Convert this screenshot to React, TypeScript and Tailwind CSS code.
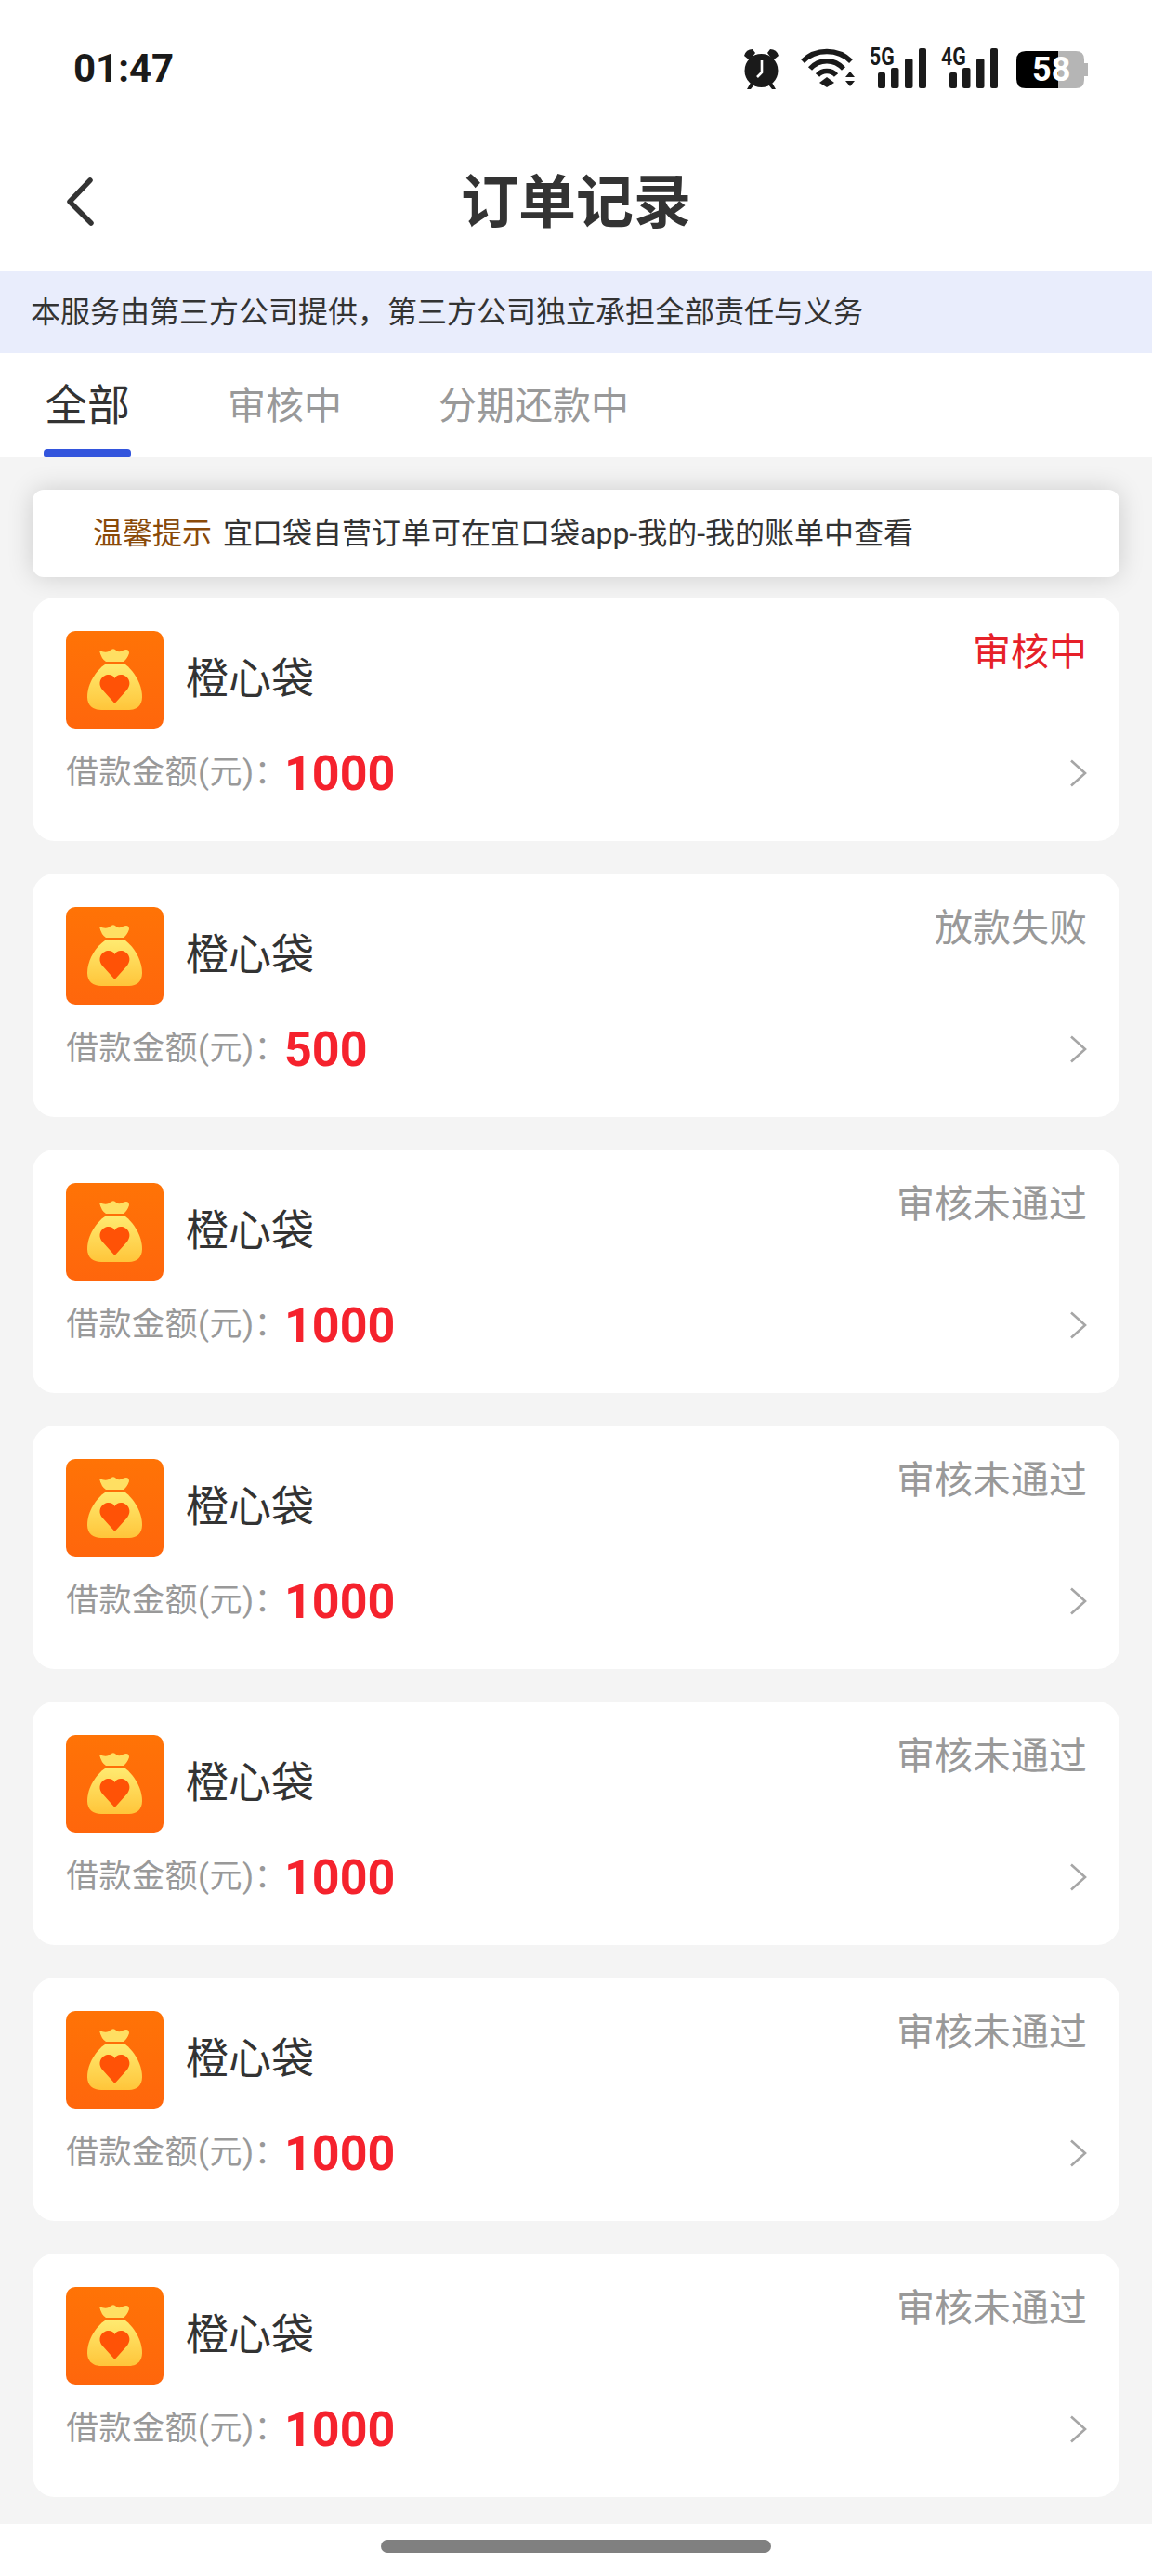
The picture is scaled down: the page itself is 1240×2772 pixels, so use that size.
const orders = [
  { amount: '1000', status: '审核中', active: true },
  { amount: '500', status: '放款失败' },
  { amount: '1000', status: '审核未通过' },
  { amount: '1000', status: '审核未通过' },
  { amount: '1000', status: '审核未通过' },
  { amount: '1000', status: '审核未通过' },
  { amount: '1000', status: '审核未通过' },
];

function AlarmIcon() {
  return (
    <svg width="43" height="44" viewBox="0 0 43 44" className="shrink-0">
      <path d="M9 13 3 8Q5 1 12 1l3 4Z" fill="#1a1a1a" />
      <path d="M34 13l6-5Q38 1 31 1l-3 4Z" fill="#1a1a1a" />
      <path d="M10 37 6 44h4l4-5ZM33 37l4 7h-4l-4-5Z" fill="#1a1a1a" />
      <circle cx="21.5" cy="24" r="18" fill="#1a1a1a" />
      <path d="M22 13v13l-5 5" fill="none" stroke="#fff" strokeWidth="2.6" />
    </svg>
  );
}

function WifiIcon() {
  return (
    <svg width="60" height="42" viewBox="0 0 60 42" className="ml-[21px] shrink-0">
      <g fill="none" stroke="#1a1a1a" strokeWidth="5.5">
        <path d="M2 14C16 0 40 0 54 14" />
        <path d="M10 22C20 11 36 11 46 22" />
        <path d="M18 29C23 23 33 23 38 29" />
      </g>
      <path d="M28 31 36 37 28 42 20 37Z" fill="#1a1a1a" />
      <path d="M48 31 53 25 58 31ZM48 35 58 35 53 41Z" fill="#1a1a1a" />
    </svg>
  );
}

function SignalIcon({ label, className }: { label: string; className: string }) {
  return (
    <div className={`relative h-[43px] w-[60px] shrink-0 ${className}`}>
      <span className="absolute -left-[1px] -top-[3px] origin-top-left scale-x-[0.85] font-['Roboto',sans-serif] text-[25px] font-bold leading-[25px] text-[#1a1a1a]">
        {label}
      </span>
      <svg width="60" height="43" viewBox="0 0 60 43">
        <rect x="8" y="26" width="8" height="17" rx="2" fill="#1a1a1a" />
        <rect x="22" y="21" width="8.5" height="22" rx="2" fill="#1a1a1a" />
        <rect x="37" y="11" width="8.5" height="32" rx="2" fill="#1a1a1a" />
        <rect x="52" y="0" width="8" height="43" rx="2" fill="#1a1a1a" />
      </svg>
    </div>
  );
}

function BatteryIcon() {
  return (
    <div className="relative ml-[20px] mt-[3px] h-[40px] w-[77px] shrink-0">
      <svg width="77" height="40" viewBox="0 0 77 40">
        <path d="M45 0H10Q0 0 0 10V30Q0 40 10 40H45Z" fill="#000" />
        <path d="M45 0H64Q73 0 73 9V13H77V27H73V31Q73 40 64 40H45Z" fill="#b5b5b5" />
      </svg>
      <span className="absolute left-[17px] top-0 font-['Roboto',sans-serif] text-[36px] font-bold leading-[40px] text-white">
        58
      </span>
    </div>
  );
}

function BagLogo() {
  return (
    <div className="h-[105px] w-[105px] shrink-0 overflow-hidden rounded-[10px] bg-gradient-to-b from-[#ff7306] to-[#ff660c]">
      <svg width="105" height="105" viewBox="0 0 105 105">
        <defs>
          <linearGradient id="bag" x1="0" y1="0" x2="0" y2="1">
            <stop offset="0" stopColor="#ffea70" />
            <stop offset="1" stopColor="#ffc53a" />
          </linearGradient>
        </defs>
        <path d="M36 21Q42 24 46 22 50 18 53 20 56 24 61 21 68 18 68 24 66 30 62 33H43Q38 30 36 21Z" fill="#ffdf62" />
        <path d="M42 36H64C72 42 82 56 82 71 82 80 76 85 68 85H38C29 85 23 80 23 71 23 56 33 42 42 36Z" fill="url(#bag)" />
        <path d="M52.5 78 39 63C33 55 39 47 46 47 49 47 51 48 52.5 51 54 48 56 47 59 47 66 47 72 55 66 63Z" fill="#ff5206" />
      </svg>
    </div>
  );
}

function OrderCard({ amount, status, active }: { amount: string; status: string; active?: boolean }) {
  return (
    <div className="h-[262px] rounded-[24px] bg-white pl-[36px] pr-[35px] pt-[36px]">
      <div className="flex justify-between">
        <div className="flex items-center gap-[24px]">
          <BagLogo />
          <span className="pb-[3px] text-[46px] leading-[60px] text-[#333]">橙心袋</span>
        </div>
        <span className={`-mt-[5px] text-[41px] leading-[56px] ${active ? 'text-[#e62129]' : 'text-[#999]'}`}>{status}</span>
      </div>
      <div className="mt-[18px] flex h-[60px] items-center justify-between">
        <div className="flex items-center">
          <span className="w-[235px] whitespace-nowrap text-[35px] tracking-[0.5px] text-[#999]">借款金额(元)：</span>
          <span className="pt-[2px] font-['Roboto',sans-serif] text-[52px] font-bold text-[#f5222d]">{amount}</span>
        </div>
        <svg width="19" height="30" viewBox="0 0 19 30" className="shrink-0">
          <path d="M2 1.5 17 15 2 28.5" fill="none" stroke="#a6a6a6" strokeWidth="2.6" />
        </svg>
      </div>
    </div>
  );
}

export default function App() {
  return (
    <div className="flex h-[2772px] w-[1240px] flex-col bg-white font-['Roboto','Noto_Sans_CJK_SC',sans-serif]">
      {/* status bar */}
      <div className="flex h-[146px] shrink-0 items-start justify-between pl-[79px] pr-[69px] pt-[52px]">
        <span className="pt-[2px] text-[42px] font-bold leading-[40px] text-[#1a1a1a]">01:47</span>
        <div className="flex items-start">
          <AlarmIcon />
          <WifiIcon />
          <SignalIcon label="5G" className="ml-[15px]" />
          <SignalIcon label="4G" className="ml-[17px]" />
          <BatteryIcon />
        </div>
      </div>

      {/* header */}
      <div className="relative flex h-[146px] shrink-0 items-center justify-center">
        <svg width="32" height="54" viewBox="0 0 32 54" className="absolute left-[70px] top-[44px]">
          <path d="M27 4 5 27l23 23" fill="none" stroke="#333" strokeWidth="5.5" strokeLinecap="round" strokeLinejoin="round" />
        </svg>
        <h1 className="text-[62px] font-bold leading-none text-[#333]">订单记录</h1>
      </div>

      {/* notice banner */}
      <div className="flex h-[88px] shrink-0 items-center bg-[#e9edfc] pl-[33px] text-[32px] text-[#333]">
        本服务由第三方公司提供，第三方公司独立承担全部责任与义务
      </div>

      {/* tabs */}
      <div className="flex h-[112px] shrink-0 pl-[47px]">
        <div className="relative w-[94px] pt-[24px] text-center text-[46px] leading-[64px] text-[#333]">
          全部
          <div className="absolute bottom-0 left-0 h-[9px] w-[94px] rounded-t-[4px] rounded-b-[2px] bg-[#3355dd]" />
        </div>
        <div className="ml-[104px] pt-[27px] text-[41px] leading-[60px] text-[#999]">审核中</div>
        <div className="ml-[104px] pt-[27px] text-[41px] leading-[60px] text-[#999]">分期还款中</div>
      </div>

      {/* list */}
      <div className="flex flex-1 flex-col bg-[#f4f4f4] px-[35px] pt-[35px]">
        <div className="mb-[22px] flex h-[94px] items-center rounded-[12px] bg-white pl-[65px] text-[32px] text-[#333] shadow-[0_0_28px_rgba(0,0,0,0.16)]">
          <span className="w-[140px] text-[#8a4a08]">温馨提示</span>
          <span>宜口袋自营订单可在宜口袋app-我的-我的账单中查看</span>
        </div>
        <div className="relative flex flex-col gap-[35px]">
          {orders.map((order, i) => (
            <OrderCard key={i} {...order} />
          ))}
        </div>
      </div>

      {/* home bar */}
      <div className="flex h-[56px] shrink-0 justify-center pt-[17px]">
        <div className="h-[14px] w-[420px] rounded-full bg-[#808080]" />
      </div>
    </div>
  );
}
